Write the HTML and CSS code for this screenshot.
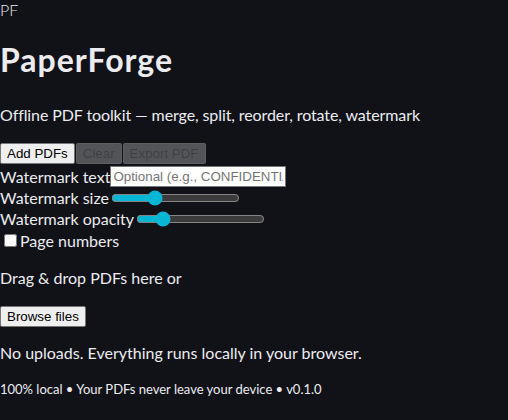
FILE: index.html
```html
<!DOCTYPE html>
<html lang="en">
<head>
<meta charset="utf-8">
<title>PaperForge</title>
<link rel="stylesheet" href="styles.css">
</head>
<body>
<div class="logo">PF</div>
<h1 class="title">PaperForge</h1>
<p class="subtitle">Offline PDF toolkit — merge, split, reorder, rotate, watermark</p>
<div class="toolbar">
  <button class="btn">Add PDFs</button>
  <button class="btn" disabled>Clear</button>
  <button class="btn" disabled>Export PDF</button>
</div>
<div class="options">
  <label class="opt">Watermark text<input class="text-input" type="text" placeholder="Optional (e.g., CONFIDENTIAL)"></label>
  <label class="opt">Watermark size<input class="range" type="range" min="0" max="100" value="32"></label>
  <label class="opt">Watermark opacity<input class="range" type="range" min="0" max="100" value="17"></label>
  <label class="opt check"><input type="checkbox" class="checkbox">Page numbers</label>
</div>
<p class="drop">Drag &amp; drop PDFs here or</p>
<button class="btn">Browse files</button>
<p class="note">No uploads. Everything runs locally in your browser.</p>
<p class="footer">100% local • Your PDFs never leave your device • v0.1.0</p>
</body>
</html>
```
FILE: styles.css
```css
html, body {
  margin: 0;
  padding: 0;
}
body {
  background: #111218;
  color: #ececf0;
  font-family: Lato, "Open Sans", sans-serif;
  font-size: 16px;
  line-height: 21px;
}
p {
  margin: 0;
}
.logo {
  line-height: 19px;
  font-weight: 300;
}
.title {
  font-size: 32px;
  line-height: 42px;
  font-weight: 700;
  letter-spacing: 1px;
  margin: 20px 0 0;
}
.subtitle {
  margin-top: 23px;
  letter-spacing: -0.1px;
}
.toolbar {
  display: flex;
  gap: 1px;
  margin-top: 18px;
}
.btn {
  font-family: "Liberation Sans", Arial, sans-serif;
  font-size: 13.333px;
  padding: 1px 6px;
  height: 21px;
  background: #efefef;
  color: #000;
  border: 1px solid #767676;
  border-radius: 2px;
}
.btn:disabled {
  background: rgba(239,239,239,0.3);
  color: rgba(16,16,16,0.3);
  border-color: rgba(118,118,118,0.3);
}
.options {
  display: flex;
  flex-direction: column;
  align-items: flex-start;
  margin-top: 2px;
}
.opt {
  display: flex;
  align-items: center;
  height: 21px;
}
.opt.check {
  height: 23px;
}
.text-input {
  font-family: "Liberation Sans", Arial, sans-serif;
  font-size: 13.333px;
  width: 176px;
  height: 21px;
  box-sizing: border-box;
  padding: 1px 2px;
  margin: 0;
  border: 1px solid #767676;
  background: #fff;
}
.range {
  accent-color: #06b6d4;
  width: 129px;
  margin: 2px;
}
.checkbox {
  margin: 3px 3px 3px 4px;
  width: 13px;
  height: 13px;
}
.drop {
  margin: 15px 0 16px;
}
.note {
  margin: 15px 0 16px;
}
.footer {
  font-size: 13px;
}
```
